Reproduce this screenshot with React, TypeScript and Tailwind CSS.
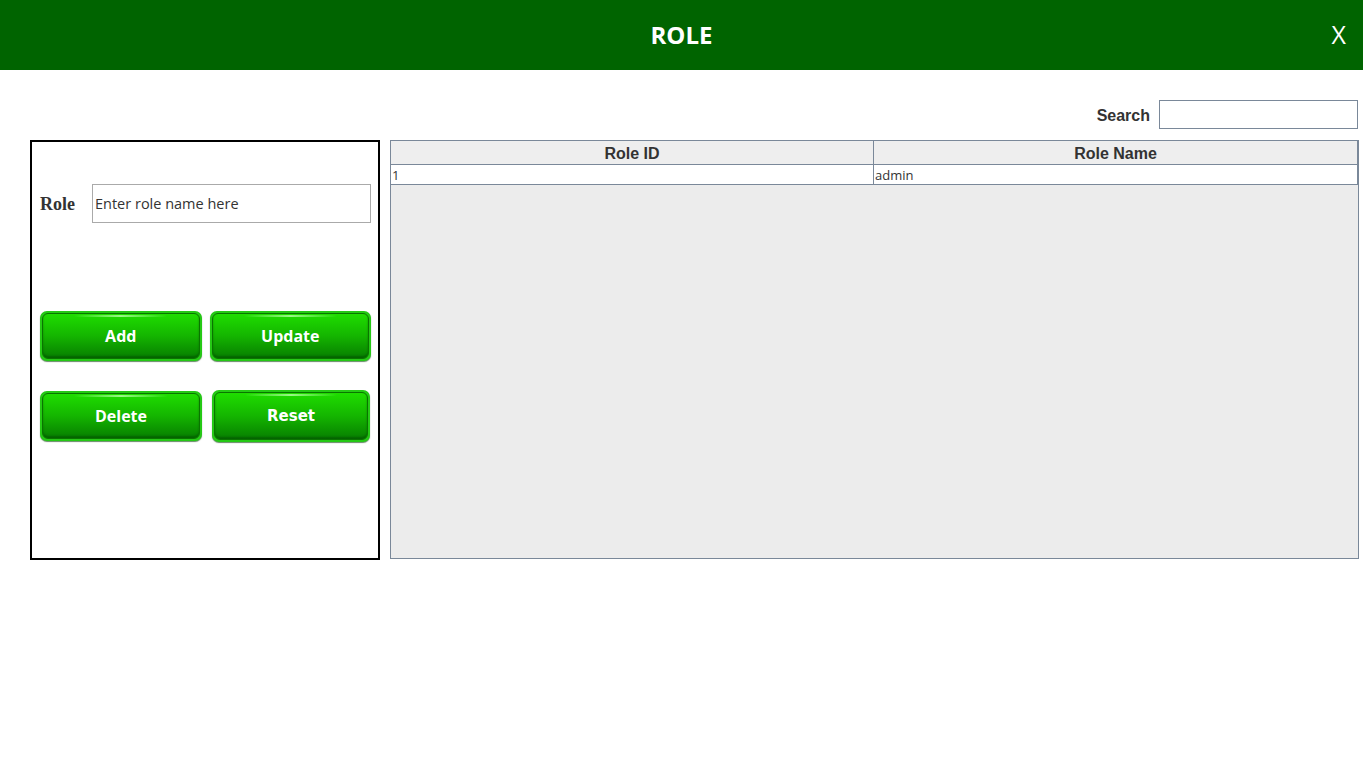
import React from "react";

function GreenButton({ label, font, w = "w-[162px]", h = "h-[50px]" }: { label: string; font: string; w?: string; h?: string }) {
  return (
    <button
      className={`${w} ${h} rounded-[7px] bg-[#25c915] p-[2px] shadow-[0_1px_1px_rgba(0,60,0,0.6)]`}
    >
      <div className="relative flex h-full w-full items-center justify-center rounded-[6px] border border-[#0a7400] bg-gradient-to-b from-[#1fdd00] via-[#14b500] to-[#077f00] shadow-[inset_0_-2px_2px_rgba(0,70,0,0.5)]">
        <div className="absolute left-[20%] right-[20%] top-[1px] h-[2px] rounded-full bg-gradient-to-r from-transparent via-[#b8ffa8] to-transparent opacity-80" />
        <span className={`font-bold text-white ${font}`}>{label}</span>
      </div>
    </button>
  );
}

export default function App() {
  return (
    <div className="min-h-[764px] w-[1363px] bg-white">
      <div className="relative flex h-[70px] items-center justify-center bg-[#006400]">
        <span className="font-['Open_Sans',sans-serif] text-[24px] font-bold text-white">ROLE</span>
        <span className="absolute right-[17px] top-[16px] font-['Open_Sans',sans-serif] text-[25px] text-white">X</span>
      </div>

      <div className="mt-[30px] flex items-center justify-end pr-[5px]">
        <span className="mr-[9px] pt-[2px] font-['Liberation_Sans',sans-serif] text-[16px] font-bold text-[#333]">Search</span>
        <input className="h-[29px] w-[199px] border border-[#7a8899] bg-white px-1 outline-none" />
      </div>

      <div className="mt-[11px] flex items-start">
        <div className="ml-[30px] h-[420px] w-[350px] border-2 border-black pl-[8px] pr-[7px] pt-[42px]">
          <div className="flex items-center">
            <span className="w-[52px] pt-[2px] font-['Liberation_Serif',serif] text-[18px] font-bold text-[#333]">Role</span>
            <input
              placeholder="Enter role name here"
              className="h-[39px] w-[279px] border border-[#aaaaaa] bg-white px-[2px] font-['Open_Sans',sans-serif] text-[14.5px] text-[#333] outline-none placeholder:text-[#333]"
            />
          </div>
          <div className="mt-[88px] flex gap-[8px]">
            <GreenButton label="Add" font="font-['Open_Sans',sans-serif] text-[16px]" />
            <GreenButton label="Update" font="font-['Open_Sans',sans-serif] text-[16px]" />
          </div>
          <div className="mt-[29px] flex items-center gap-[10px]">
            <GreenButton label="Delete" font="font-['Open_Sans',sans-serif] text-[16px]" />
            <GreenButton label="Reset" font="font-['DejaVu_Sans',sans-serif] text-[15px]" w="w-[158px]" h="h-[52px]" />
          </div>
        </div>

        <div className="ml-[10px] flex h-[419px] w-[969px] flex-col border border-[#7a8899] bg-[#ececec]">
          <div className="flex h-[24px] border-b border-[#7a8899] bg-[#eeeeee]">
            <div className="flex w-[483px] items-center justify-center border-r border-[#7a8899] pt-[2px] font-['Liberation_Sans',sans-serif] text-[16px] font-bold text-[#333]">
              Role ID
            </div>
            <div className="flex flex-1 items-center justify-center border-r border-[#7a8899] pt-[2px] font-['Liberation_Sans',sans-serif] text-[16px] font-bold text-[#333]">
              Role Name
            </div>
          </div>
          <div className="flex h-[20px] border-b border-[#7a8899] bg-white">
            <div className="flex w-[483px] items-center border-r border-[#7a8899] pl-[1px] pt-[3px] font-['Open_Sans',sans-serif] text-[13px] text-[#333]">
              1
            </div>
            <div className="flex flex-1 items-center border-r border-[#7a8899] pl-[1px] pt-[3px] font-['Open_Sans',sans-serif] text-[13px] text-[#333]">
              admin
            </div>
          </div>
        </div>
      </div>
    </div>
  );
}
